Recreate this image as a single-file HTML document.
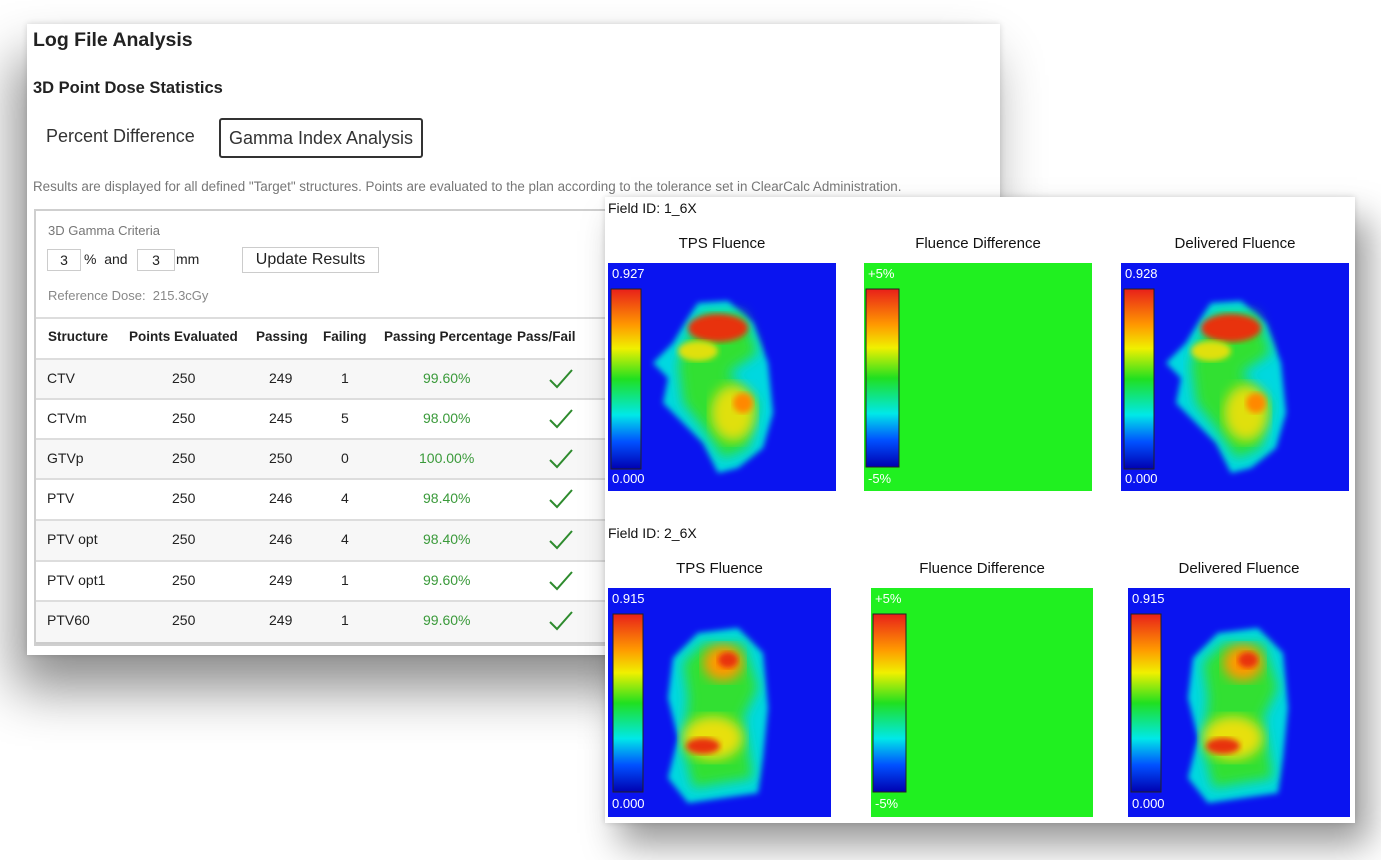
<!DOCTYPE html>
<html><head><meta charset="utf-8"><style>
body{margin:0;width:1381px;height:860px;background:#fff;position:relative;overflow:hidden;font-family:"Segoe UI","Liberation Sans",sans-serif;color:#222}
.p1{position:absolute;left:27px;top:24px;width:973px;height:631px;background:#fff;box-shadow:-12px 34px 50px rgba(0,0,0,.45),0 0 6px rgba(0,0,0,.15)}
.p2{position:absolute;left:605px;top:197px;width:750px;height:626px;background:#fff;box-shadow:14px 22px 34px rgba(0,0,0,.4),0 0 6px rgba(0,0,0,.15)}
.a{position:absolute;white-space:nowrap}
.tbl{position:absolute;left:7px;top:185px;width:590px;height:433px;border:2px solid #cfcfcf;border-right:none}
.row{position:absolute;left:0;width:590px;height:40px;border-top:2px solid #ddd;font-size:14px}
.row span{position:absolute;top:10px}
.g{color:#3a9a3a}
.lbl{position:absolute;font-family:"Liberation Sans",sans-serif;font-size:14px;color:#111}
.ck{position:absolute;left:512px;top:8px}
</style></head><body>
<div class="p1">
 <div class="a" style="left:6px;top:5px;font-size:19.5px;font-weight:600">Log File Analysis</div>
 <div class="a" style="left:6px;top:55px;font-size:16.5px;font-weight:600">3D Point Dose Statistics</div>
 <div class="a" style="left:19px;top:102px;font-size:18px;color:#333">Percent Difference</div>
 <div class="a" style="left:192px;top:94px;width:200px;height:36px;border:2px solid #333;border-radius:3px;font-size:18px;color:#333;line-height:36px;text-align:center">Gamma Index Analysis</div>
 <div class="a" style="left:6px;top:155px;font-size:13.4px;color:#777">Results are displayed for all defined "Target" structures. Points are evaluated to the plan according to the tolerance set in ClearCalc Administration.</div>
 <div class="tbl">
  <div class="a" style="left:12px;top:12px;font-size:13px;color:#777">3D Gamma Criteria</div>
  <div class="a" style="left:11px;top:38px;width:32px;height:20px;border:1px solid #ccc;font-size:14px;text-align:center;line-height:20px">3</div>
  <div class="a" style="left:48px;top:38px;font-size:14px;line-height:20px">% &nbsp;and</div>
  <div class="a" style="left:101px;top:38px;width:36px;height:20px;border:1px solid #ccc;font-size:14px;text-align:center;line-height:20px">3</div>
  <div class="a" style="left:140px;top:38px;font-size:14px;line-height:20px">mm</div>
  <div class="a" style="left:206px;top:36px;width:135px;height:24px;border:1px solid #ccc;font-size:16px;text-align:center;line-height:24px">Update Results</div>
  <div class="a" style="left:12px;top:77px;font-size:13px;color:#888">Reference Dose:&nbsp; 215.3cGy</div>
  <div class="row" style="top:106px;font-weight:600;font-size:13.5px"><span style="left:12px">Structure</span><span style="left:93px">Points Evaluated</span><span style="left:220px">Passing</span><span style="left:287px">Failing</span><span style="left:348px">Passing Percentage</span><span style="left:481px">Pass/Fail</span></div>
 </div>
 <div style="position:absolute;left:9px;top:334px;width:569px">
 <div class="row" style="top:0;background:#f7f7f7"><span style="left:11px">CTV</span><span style="left:136px">250</span><span style="left:233px">249</span><span style="left:305px">1</span><span class="g" style="left:387px">99.60%</span><svg class="ck" width="26" height="22"><path d="M2,12 L9,19 L24,2" fill="none" stroke="#2e8b2e" stroke-width="2"/></svg></div>
 <div class="row" style="top:40px"><span style="left:11px">CTVm</span><span style="left:136px">250</span><span style="left:233px">245</span><span style="left:305px">5</span><span class="g" style="left:387px">98.00%</span><svg class="ck" width="26" height="22"><path d="M2,12 L9,19 L24,2" fill="none" stroke="#2e8b2e" stroke-width="2"/></svg></div>
 <div class="row" style="top:80px;background:#f7f7f7"><span style="left:11px">GTVp</span><span style="left:136px">250</span><span style="left:233px">250</span><span style="left:305px">0</span><span class="g" style="left:383px">100.00%</span><svg class="ck" width="26" height="22"><path d="M2,12 L9,19 L24,2" fill="none" stroke="#2e8b2e" stroke-width="2"/></svg></div>
 <div class="row" style="top:120px"><span style="left:11px">PTV</span><span style="left:136px">250</span><span style="left:233px">246</span><span style="left:305px">4</span><span class="g" style="left:387px">98.40%</span><svg class="ck" width="26" height="22"><path d="M2,12 L9,19 L24,2" fill="none" stroke="#2e8b2e" stroke-width="2"/></svg></div>
 <div class="row" style="top:161px;background:#f7f7f7"><span style="left:11px">PTV opt</span><span style="left:136px">250</span><span style="left:233px">246</span><span style="left:305px">4</span><span class="g" style="left:387px">98.40%</span><svg class="ck" width="26" height="22"><path d="M2,12 L9,19 L24,2" fill="none" stroke="#2e8b2e" stroke-width="2"/></svg></div>
 <div class="row" style="top:202px"><span style="left:11px">PTV opt1</span><span style="left:136px">250</span><span style="left:233px">249</span><span style="left:305px">1</span><span class="g" style="left:387px">99.60%</span><svg class="ck" width="26" height="22"><path d="M2,12 L9,19 L24,2" fill="none" stroke="#2e8b2e" stroke-width="2"/></svg></div>
 <div class="row" style="top:242px;background:#f7f7f7;border-bottom:2px solid #ccc"><span style="left:11px">PTV60</span><span style="left:136px">250</span><span style="left:233px">249</span><span style="left:305px">1</span><span class="g" style="left:387px">99.60%</span><svg class="ck" width="26" height="22"><path d="M2,12 L9,19 L24,2" fill="none" stroke="#2e8b2e" stroke-width="2"/></svg></div>
 </div>
</div>
<div class="p2">
 <div class="lbl" style="left:3px;top:3px">Field ID: 1_6X</div>
 <div class="lbl" style="left:3px;top:328px">Field ID: 2_6X</div>
 <div class="lbl" style="left:3px;top:38px;width:228px;text-align:center;font-size:15px">TPS Fluence</div>
 <div class="lbl" style="left:259px;top:38px;width:228px;text-align:center;font-size:15px">Fluence Difference</div>
 <div class="lbl" style="left:516px;top:38px;width:228px;text-align:center;font-size:15px">Delivered Fluence</div>
 <div class="lbl" style="left:3px;top:363px;width:223px;text-align:center;font-size:15px">TPS Fluence</div>
 <div class="lbl" style="left:266px;top:363px;width:222px;text-align:center;font-size:15px">Fluence Difference</div>
 <div class="lbl" style="left:523px;top:363px;width:222px;text-align:center;font-size:15px">Delivered Fluence</div>
</div>
<svg width="1381" height="860" style="position:absolute;left:0;top:0">
<defs>
<linearGradient id="cb" x1="0" y1="0" x2="0" y2="1"><stop offset="0" stop-color="#e8201a"/><stop offset=".2" stop-color="#ff9900"/><stop offset=".33" stop-color="#f0f000"/><stop offset=".5" stop-color="#20e020"/><stop offset=".7" stop-color="#00e8e8"/><stop offset=".85" stop-color="#0050ff"/><stop offset="1" stop-color="#0000b0"/></linearGradient>
<filter id="bl"><feGaussianBlur stdDeviation="6"/></filter>
<filter id="bl2"><feGaussianBlur stdDeviation="3"/></filter>
<g id="blob1">
 <path d="M90,40 L120,38 L145,60 L160,100 L165,150 L155,185 L130,205 L110,210 L95,180 L75,160 L55,140 L60,115 L45,100 L65,80 L80,55 Z" fill="#00d8e0" filter="url(#bl2)"/>
 <path d="M95,50 L135,50 L150,90 L120,110 L150,140 L140,185 L115,195 L95,165 L75,140 L70,100 L80,75 Z" fill="#30e030" filter="url(#bl)"/>
 <ellipse cx="110" cy="65" rx="30" ry="14" fill="#e83010" filter="url(#bl2)"/>
 <ellipse cx="90" cy="88" rx="20" ry="10" fill="#e0e010" filter="url(#bl2)"/>
 <ellipse cx="125" cy="150" rx="22" ry="28" fill="#e0e010" filter="url(#bl)"/>
 <ellipse cx="135" cy="140" rx="10" ry="10" fill="#ff8800" filter="url(#bl2)"/>
</g>
<g id="blob2">
 <path d="M90,45 L130,40 L155,65 L160,120 L155,170 L150,205 L80,215 L60,190 L70,150 L60,110 L65,70 Z" fill="#00d8e0" filter="url(#bl2)"/>
 <path d="M95,55 L135,55 L150,100 L135,130 L145,190 L85,200 L75,160 L80,110 L75,75 Z" fill="#30e030" filter="url(#bl)"/>
 <ellipse cx="115" cy="75" rx="20" ry="18" fill="#ff9900" filter="url(#bl)"/>
 <ellipse cx="120" cy="72" rx="10" ry="8" fill="#e83010" filter="url(#bl2)"/>
 <ellipse cx="105" cy="150" rx="30" ry="22" fill="#e8e010" filter="url(#bl)"/>
 <ellipse cx="95" cy="158" rx="17" ry="8" fill="#e83010" filter="url(#bl2)"/>
</g>
</defs>
<g font-family="Liberation Sans,sans-serif" font-size="13" fill="#fff">
<g transform="translate(608,263)"><rect width="228" height="228" fill="#0a14f0"/><use href="#blob1"/><rect x="3" y="26" width="30" height="180" fill="url(#cb)" stroke="#222"/><text x="4" y="15">0.927</text><text x="4" y="220">0.000</text></g>
<g transform="translate(864,263)"><rect width="228" height="228" fill="#20f020"/><rect x="2" y="26" width="33" height="178" fill="url(#cb)" stroke="#222"/><text x="4" y="15">+5%</text><text x="4" y="220">-5%</text></g>
<g transform="translate(1121,263)"><rect width="228" height="228" fill="#0a14f0"/><use href="#blob1"/><rect x="3" y="26" width="30" height="180" fill="url(#cb)" stroke="#222"/><text x="4" y="15">0.928</text><text x="4" y="220">0.000</text></g>
<g transform="translate(608,588)"><rect width="223" height="229" fill="#0a14f0"/><use href="#blob2"/><rect x="5" y="26" width="30" height="178" fill="url(#cb)" stroke="#222"/><text x="4" y="15">0.915</text><text x="4" y="220">0.000</text></g>
<g transform="translate(871,588)"><rect width="222" height="229" fill="#20f020"/><rect x="2" y="26" width="33" height="178" fill="url(#cb)" stroke="#222"/><text x="4" y="15">+5%</text><text x="4" y="220">-5%</text></g>
<g transform="translate(1128,588)"><rect width="222" height="229" fill="#0a14f0"/><use href="#blob2"/><rect x="3" y="26" width="30" height="178" fill="url(#cb)" stroke="#222"/><text x="4" y="15">0.915</text><text x="4" y="220">0.000</text></g>
</g>
</svg>
</body></html>
